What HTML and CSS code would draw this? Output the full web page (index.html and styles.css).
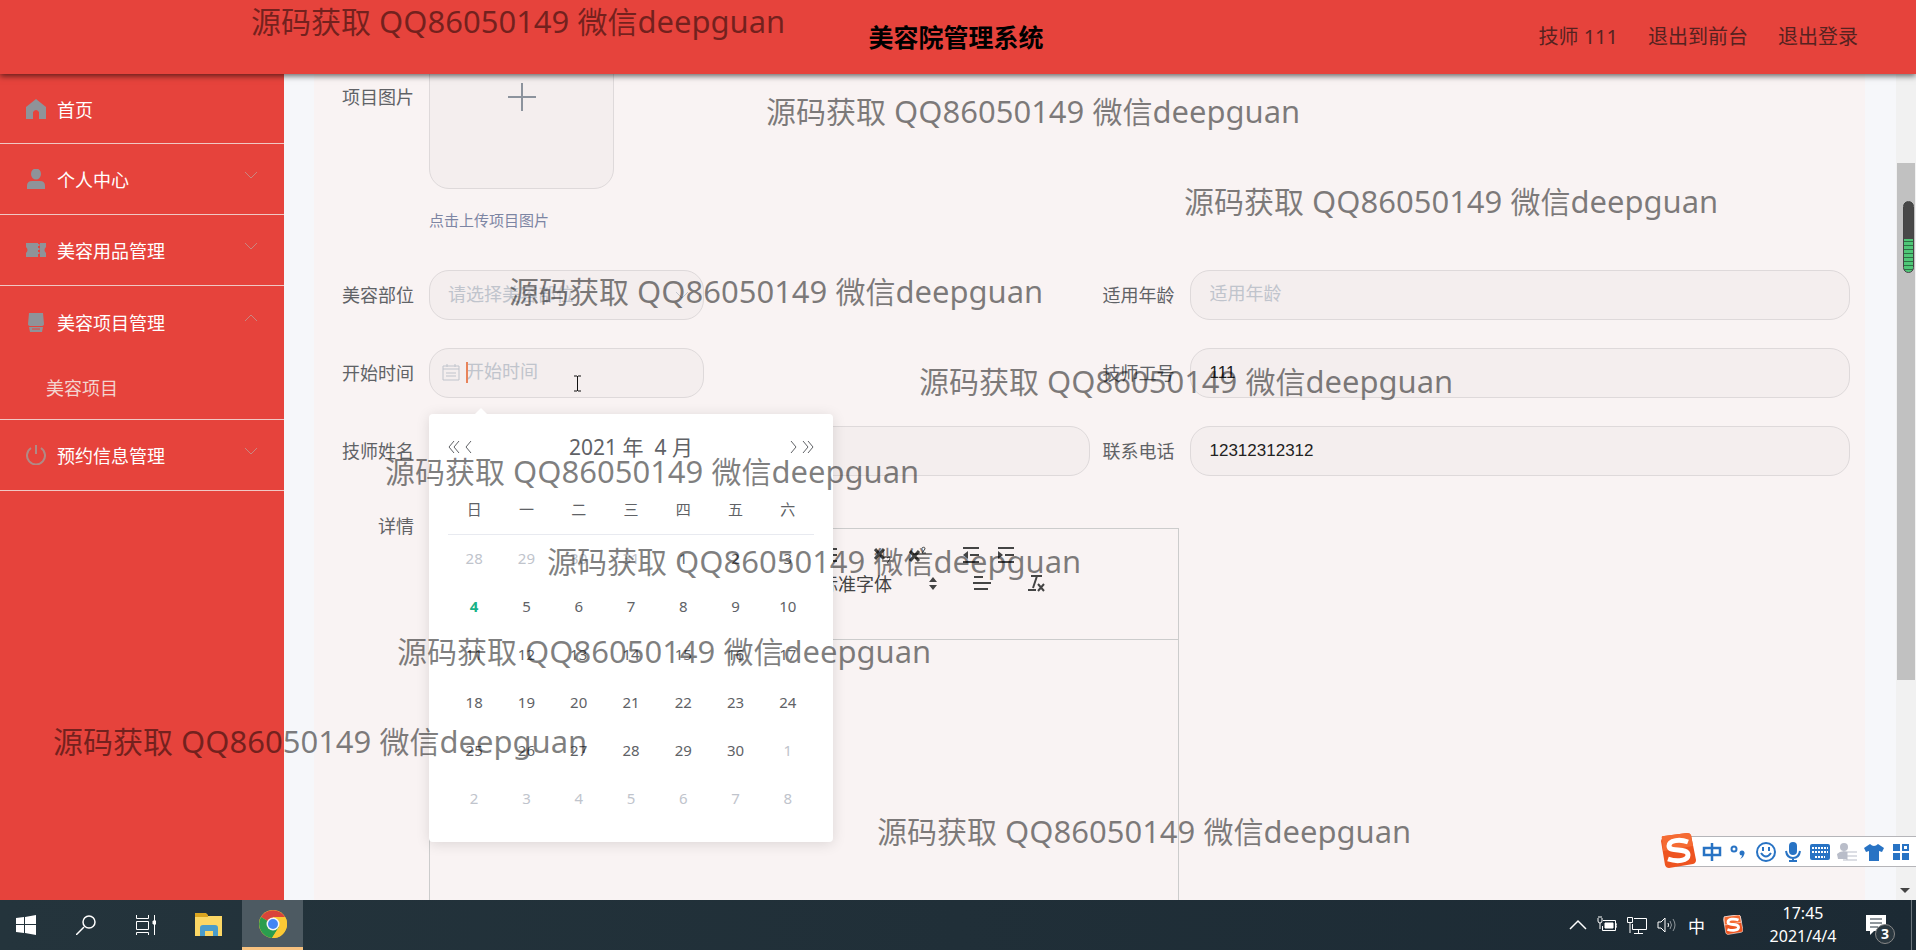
FILE: index.html
```html
<!DOCTYPE html>
<html lang="zh-CN">
<head>
<meta charset="utf-8">
<title>美容院管理系统</title>
<link rel="stylesheet" href="styles.css">
</head>
<body>
<svg class="defs" aria-hidden="true">
  <symbol id="sogou" viewBox="0 0 36 36">
    <path d="M2 5Q1 3 4 3L27 0Q30 0 31 2L36 27Q36 30 33 31L9 35Q6 35 5 32L1 8Z" fill="#ee5420"/>
    <path d="M2 5Q1 3 4 3L27 0Q30 0 31 2L33 13Q17 16 3 18Z" fill="#f56b33"/>
    <path d="M28 9C20 6 9 7 9 13C9 20 28 14 28 22C28 28 17 29 8 26" fill="none" stroke="#fff" stroke-width="5"/>
  </symbol>
  <symbol id="down" viewBox="0 0 14 22"><path d="M1 4L7 10L13 4" fill="none" stroke="currentColor" stroke-width="1"/></symbol>
  <symbol id="up" viewBox="0 0 14 22"><path d="M1 10L7 4L13 10" fill="none" stroke="currentColor" stroke-width="1"/></symbol>
</svg>

<header class="topbar">
  <h1 class="title">美容院管理系统</h1>
  <nav class="account">
    <a href="#">技师 111</a>
    <a href="#">退出到前台</a>
    <a href="#">退出登录</a>
  </nav>
</header>

<div class="main">
  <nav class="sidebar">
    <a class="item first" href="#">
      <svg class="mi" viewBox="0 0 20 20"><path d="M10 0L20 8V20H13V13Q10 9 7 13V20H0V8Z" fill="currentColor"/></svg>
      <span>首页</span>
    </a>
    <a class="item" href="#">
      <svg class="mi" viewBox="0 0 20 20"><ellipse cx="10" cy="5" rx="5" ry="5.500"/><path d="M1 20V17Q1 12 6 12H14Q19 12 19 17V20Z"/></svg>
      <span>个人中心</span>
      <svg class="chev"><use href="#down"/></svg>
    </a>
    <a class="item" href="#">
      <svg class="mi" viewBox="0 0 20 20"><path d="M0 3H12V17H0V13Q3 10 0 7ZM14 3H20V7Q17 10 20 13V17H14Z"/><path d="M12 4V6M12 8V10M12 12V14" stroke="#8f9399" stroke-width="3"/></svg>
      <span>美容用品管理</span>
      <svg class="chev"><use href="#down"/></svg>
    </a>
    <div class="group">
      <a class="item" href="#">
        <svg class="mi" viewBox="0 0 20 20"><path d="M3 1H17L18 12Q18 14 15 14H5Q2 14 2 12ZM3 15H17L16 20H4Z"/><path d="M6 17H14" stroke="#e6433c"/></svg>
        <span>美容项目管理</span>
        <svg class="chev"><use href="#up"/></svg>
      </a>
      <a class="subitem" href="#">美容项目</a>
    </div>
    <a class="item" href="#">
      <svg class="mi line" viewBox="0 0 20 20"><path d="M5 3A9 9 0 1 0 15 3M10 0V9"/></svg>
      <span>预约信息管理</span>
      <svg class="chev"><use href="#down"/></svg>
    </a>
  </nav>

  <main class="content">
    <form class="form">
      <div class="field wide">
        <label class="label" for="pic">项目图片</label>
        <button class="upload" id="pic" type="button" aria-label="上传项目图片">
          <svg width="30" height="30" viewBox="0 0 30 30"><path d="M15 1V29M1 15H29" stroke="#8c939d" stroke-width="2"/></svg>
        </button>
      </div>
      <p class="hint">点击上传项目图片</p>

      <div class="field">
        <label class="label" for="part">美容部位</label>
        <div class="short">
          <select class="control" id="part"><option>请选择美容部位</option></select>
          <svg class="select-arrow"><use href="#down"/></svg>
        </div>
      </div>
      <div class="field">
        <label class="label" for="age">适用年龄</label>
        <input class="control" id="age" placeholder="适用年龄">
      </div>

      <div class="field">
        <label class="label" for="start">开始时间</label>
        <div class="short">
          <input class="control date" id="start" placeholder="开始时间">
          <svg class="cal-icon" viewBox="0 0 18 18"><path d="M1 3H17V17H1ZM1 6H17M5 1V4M13 1V4M4 10H14M4 13H14"/></svg>
          <span class="caret"></span>
          <svg class="pointer" viewBox="0 0 9 17"><path d="M1 1H4M5 1H8M4.500 1V16M1 16H4M5 16H8" stroke="#111" fill="none"/></svg>
          <section class="picker" aria-label="选择日期">
            <div class="picker-head">
              <div class="arrows">
                <button type="button" aria-label="上一年"><svg width="12" height="14" viewBox="0 0 12 14"><path d="M6 1L1 7L6 13M11 1L6 7L11 13"/></svg></button>
                <button type="button" aria-label="上个月"><svg width="12" height="14" viewBox="0 0 12 14"><path d="M9 1L4 7L9 13"/></svg></button>
              </div>
              <span class="month">2021 年&nbsp; 4 月</span>
              <div class="arrows">
                <button type="button" aria-label="下个月"><svg width="12" height="14" viewBox="0 0 12 14"><path d="M3 1L8 7L3 13"/></svg></button>
                <button type="button" aria-label="下一年"><svg width="12" height="14" viewBox="0 0 12 14"><path d="M1 1L6 7L1 13M6 1L11 7L6 13"/></svg></button>
              </div>
            </div>
            <table class="days">
              <thead><tr><th>日</th><th>一</th><th>二</th><th>三</th><th>四</th><th>五</th><th>六</th></tr></thead>
              <tbody>
                <tr><td class="out">28</td><td class="out">29</td><td class="out">30</td><td class="out">31</td><td>1</td><td>2</td><td>3</td></tr>
                <tr><td class="today">4</td><td>5</td><td>6</td><td>7</td><td>8</td><td>9</td><td>10</td></tr>
                <tr><td>11</td><td>12</td><td>13</td><td>14</td><td>15</td><td>16</td><td>17</td></tr>
                <tr><td>18</td><td>19</td><td>20</td><td>21</td><td>22</td><td>23</td><td>24</td></tr>
                <tr><td>25</td><td>26</td><td>27</td><td>28</td><td>29</td><td>30</td><td class="out">1</td></tr>
                <tr><td class="out">2</td><td class="out">3</td><td class="out">4</td><td class="out">5</td><td class="out">6</td><td class="out">7</td><td class="out">8</td></tr>
              </tbody>
            </table>
          </section>
        </div>
      </div>
      <div class="field">
        <label class="label" for="no">技师工号</label>
        <input class="control" id="no" value="111">
      </div>

      <div class="field">
        <label class="label" for="name">技师姓名</label>
        <input class="control" id="name">
      </div>
      <div class="field">
        <label class="label" for="tel">联系电话</label>
        <input class="control" id="tel" value="12312312312">
      </div>

      <div class="field wide detail">
        <span class="label">详情</span>
        <div class="editor">
          <div class="toolbar">
            <div class="tools">
              <button type="button" class="list" aria-label="列表"><svg viewBox="0 0 18 18"><path d="M1 3H17M1 9H17M1 15H17"/></svg></button>
              <button type="button" class="sub" aria-label="下标"><svg viewBox="0 0 18 18"><path class="bold" d="M1 3L10 13M10 3L1 13"/><path class="thin" d="M13 12Q16 10 16 13L13 17H17"/></svg></button>
              <button type="button" class="sup" aria-label="上标"><svg viewBox="0 0 18 18"><path class="bold" d="M1 5L10 15M10 5L1 15"/><path class="thin" d="M13 2Q16 0 16 3L13 7H17"/></svg></button>
              <button type="button" class="outdent" aria-label="减少缩进"><svg viewBox="0 0 18 18"><path d="M1 2H17M8 9H17M1 16H17"/><path class="solid" d="M6 5V13L1 9Z"/></svg></button>
              <button type="button" class="indent" aria-label="增加缩进"><svg viewBox="0 0 18 18"><path d="M1 2H17M8 9H17M1 16H17"/><path class="solid" d="M1 5V13L6 9Z"/></svg></button>
            </div>
            <div class="tools second">
              <button type="button" class="font">标准字体 <svg viewBox="0 0 18 18"><path class="solid" d="M5 8L9 3L13 8ZM5 11L9 16L13 11Z"/></svg></button>
              <button type="button" class="align" aria-label="对齐"><svg viewBox="0 0 18 18"><path d="M1 3H10M0 9H18M1 15H15"/></svg></button>
              <button type="button" aria-label="清除格式"><svg viewBox="0 0 18 18"><path d="M4 2H15M10 2L6 14M1 16H9M11 10L17 17M17 10L11 17"/></svg></button>
            </div>
          </div>
          <div class="paper"></div>
        </div>
      </div>
    </form>
  </main>
  <div class="scroll">
    <div class="thumb"></div>
    <svg class="scroll-arrow" viewBox="0 0 10 5"><path d="M0 0H10L5 5Z" fill="#444"/></svg>
    <div class="meter"></div>
  </div>
</div>

<footer class="taskbar">
  <div class="apps">
    <button class="app start" aria-label="开始"><svg width="20" height="20" viewBox="0 0 20 20" fill="#fff"><path d="M0 3L8 2V9H0ZM9 2L20 0V9H9ZM0 10H8V18L0 17ZM9 10H20V20L9 18Z"/></svg></button>
    <button class="app" aria-label="搜索"><svg width="20" height="20" viewBox="0 0 20 20" fill="none" stroke="#fff" stroke-width="1.500"><circle cx="13" cy="7" r="6"/><path d="M8 12L0 20"/></svg></button>
    <button class="app" aria-label="任务视图"><svg width="20" height="20" viewBox="0 0 20 20" fill="none" stroke="#fff"><path d="M0.500 0V3.500H12.500V0M0.500 6.500H12.500V14.500H0.500ZM0.500 20V17.500H12.500V20M18.500 0V20"/><path d="M17 6H20V9H17Z" fill="#fff"/></svg></button>
    <button class="app files" aria-label="文件资源管理器"><svg width="28" height="24" viewBox="0 0 28 24"><path d="M0 1H11L13 3H27V23H0Z" fill="#fcd765"/><path d="M0 0H11L13 2V4H0Z" fill="#dba520"/><path d="M5 23V15Q5 12 8 12H20Q23 12 23 15V23H18V18H10V23Z" fill="#4a9ccb"/></svg></button>
    <button class="app chrome" aria-label="Chrome"><svg width="28" height="28" viewBox="0 0 28 28"><circle cx="14" cy="14" r="14" fill="#fcc934"/><path d="M14 14L2 7A14 14 0 0 1 26 7H14Z" fill="#d9443a"/><path d="M14 14L2 7A14 14 0 0 0 13 28L20 17Z" fill="#2a9d4e"/><path d="M14 7H26.100A14 14 0 0 1 13 28L20 17Z" fill="#fcc934"/><circle cx="14" cy="14" r="6.500" fill="#f4f6f8"/><circle cx="14" cy="14" r="5" fill="#4285f4"/></svg></button>
  </div>
  <div class="tray">
    <svg width="18" height="20" viewBox="0 0 18 20"><path d="M1 14L9 6L17 14" stroke-width="1.500"/></svg>
    <svg width="20" height="20" viewBox="0 0 20 20"><path d="M6 5.500H18.500V15.500H5.500V11M18.500 9H20V12H18.500M1 3V6Q1 8 3 8Q5 8 5 6V3M2 1V3M4 1V3M3 8V14"/><path d="M8 8H16V13H8Z" fill="#fff"/></svg>
    <svg width="20" height="20" viewBox="0 0 20 20"><path d="M7 3.500H19.500V14.500H5.500V9M11.500 14V18M7 18.500H16M0.500 2.500H5.500V7.500H0.500ZM3 7V18"/></svg>
    <svg width="20" height="20" viewBox="0 0 20 20"><path d="M1 7H4L8 3V17L4 13H1ZM11 8Q12 10 11 12"/><path d="M13 6Q16 10 13 14M16 4Q20 10 16 16" opacity=".5"/></svg>
    <span class="lang">中</span>
    <svg width="20" height="20"><use href="#sogou"/></svg>
    <div class="clock"><time>17:45</time><time>2021/4/4</time></div>
    <button class="notice" aria-label="通知"><svg width="30" height="32" viewBox="0 0 30 32"><path d="M0 1H20V17H8L4 21V17H0Z" fill="#fff"/><path d="M4 5H16M4 9H16M4 13H12" stroke="#22303a"/></svg><span class="badge">3</span></button>
  </div>
</footer>

<div class="ime">
  <svg class="ime-logo"><use href="#sogou"/></svg>
  <svg viewBox="0 0 20 20"><path d="M2 6H18V13H2ZM10 1V19" fill="none" stroke="#2873c4" stroke-width="2.500"/></svg>
  <svg viewBox="0 0 20 20"><circle cx="5" cy="7" r="2.500" fill="none" stroke="#2873c4" stroke-width="2"/><circle cx="13" cy="11" r="2.500"/><path d="M15 10Q16 15 11 17Q14 14 13 11Z"/></svg>
  <svg viewBox="0 0 20 20"><g fill="none" stroke="#2873c4" stroke-width="2"><circle cx="10" cy="10" r="9"/><path d="M5 11Q10 18 15 11M7 5V9M13 5V9"/></g></svg>
  <svg viewBox="0 0 20 20"><rect x="6" y="0" width="8" height="13" rx="4"/><path d="M3 9Q4 16 10 16Q16 16 17 9M10 16V20M6 19H14" fill="none" stroke="#2873c4" stroke-width="2"/></svg>
  <svg viewBox="0 0 20 20"><rect x="0" y="2" width="20" height="16" rx="2"/><path d="M2 6H18M2 10H18M5 15H15" stroke="#fff" stroke-width="2" stroke-dasharray="2 1"/></svg>
  <svg viewBox="0 0 20 20"><g fill="#b9bdc9"><circle cx="7" cy="5" r="4"/><path d="M0 12Q4 8 10 10V17H1Z"/><path d="M6 10H20M6 14H20M6 18H20M10 10V18" stroke="#b9bdc9"/></g></svg>
  <svg viewBox="0 0 20 20"><path d="M6 2Q10 6 14 2L20 6L18 10L15 9V19H5V9L2 10L0 6Z"/></svg>
  <svg viewBox="0 0 20 20"><path d="M2 2H9V9H2ZM2 11H9V18H2ZM11 11H18V18H11Z"/><path d="M12 3H17V8H12Z" fill="none" stroke="#2873c4" stroke-width="2"/></svg>
</div>

<div class="marks" aria-hidden="true">
  <span class="mark m1">源码获取<span class="latin"> QQ86050149 </span>微信<span class="latin">deepguan</span></span>
  <span class="mark m2">源码获取<span class="latin"> QQ86050149 </span>微信<span class="latin">deepguan</span></span>
  <span class="mark m3">源码获取<span class="latin"> QQ86050149 </span>微信<span class="latin">deepguan</span></span>
  <span class="mark m4">源码获取<span class="latin"> QQ86050149 </span>微信<span class="latin">deepguan</span></span>
  <span class="mark m5">源码获取<span class="latin"> QQ86050149 </span>微信<span class="latin">deepguan</span></span>
  <span class="mark m6">源码获取<span class="latin"> QQ86050149 </span>微信<span class="latin">deepguan</span></span>
  <span class="mark m7">源码获取<span class="latin"> QQ86050149 </span>微信<span class="latin">deepguan</span></span>
  <span class="mark m8">源码获取<span class="latin"> QQ86050149 </span>微信<span class="latin">deepguan</span></span>
  <span class="mark m9">源码获取<span class="latin"> QQ86050149 </span>微信<span class="latin">deepguan</span></span>
  <span class="mark m10">源码获取<span class="latin"> QQ86050149 </span>微信<span class="latin">deepguan</span></span>
</div>
</body>
</html>
```
FILE: styles.css
```css
* { box-sizing: border-box; }
body {
  margin: 0;
  height: 100vh;
  display: flex;
  flex-direction: column;
  overflow: hidden;
  position: relative;
  font-family: "Noto Sans", "Noto Sans CJK SC", sans-serif;
  font-size: 18px;
  color: #606266;
}
a { color: inherit; text-decoration: none; }
button { font: inherit; color: inherit; border: 0; background: none; padding: 0; }
.defs { position: absolute; width: 0; height: 0; }

.topbar {
  flex: none;
  height: 74px;
  display: grid;
  grid-template-columns: 1fr auto 1fr;
  align-items: center;
  background: #e6433c;
  box-shadow: 0 2px 6px rgba(0, 0, 0, .6);
  padding-right: 4px;
  z-index: 2;
}
.title { grid-column: 2; margin: 0; font-size: 25px; line-height: 36px; color: #000; }
.account {
  display: flex;
  justify-content: flex-end;
  gap: 30px;
  padding-right: 54px;
  font-size: 20px;
  line-height: 30px;
  color: #562220;
}

.main { flex: 1; min-height: 0; display: flex; }
.sidebar { flex: none; width: 284px; background: #e6433c; color: #fff; }
.item {
  height: 71px;
  display: flex;
  align-items: center;
  padding: 0 26px;
  border-bottom: 1px solid #f0c8c4;
}
.first { height: 70px; }
.mi { width: 20px; height: 20px; margin-right: 11px; fill: #8f9399; color: #8f9399; }
.mi.line { fill: none; stroke: #b08a86; stroke-width: 2; }
.chev { width: 14px; height: 22px; margin-left: auto; color: #c98680; }
.group { border-bottom: 1px solid #f0c8c4; }
.group .item { border: 0; }
.subitem { display: block; padding-left: 46px; line-height: 62px; color: #f3d5d0; }

.content { flex: 1; min-width: 0; padding: 0 31px 0 30px; background: #f6f7fa; overflow: hidden; }
.form {
  margin-top: -70px;
  padding: 0 15px;
  background: #f9f3f3;
  display: grid;
  grid-template-columns: 1fr 1fr;
  row-gap: 28px;
}
.field { display: flex; align-items: center; min-width: 0; }
.wide { grid-column: 1 / 3; }
.label { flex: none; width: 100px; padding-right: 15px; text-align: right; line-height: 44px; }
.upload {
  width: 185px;
  height: 185px;
  display: flex;
  align-items: center;
  justify-content: center;
  background: #f4eeee;
  border: 1px solid #ded9da;
  border-radius: 20px;
}
.hint {
  grid-column: 1 / 3;
  margin: -8px 0 0;
  padding: 0 0 11px 100px;
  font-size: 15px;
  line-height: 22px;
  color: #7d85a3;
}
.control {
  width: 100%;
  height: 50px;
  padding: 0 19px;
  border: 1px solid #ded9da;
  border-radius: 20px;
  background: #f4eeee;
  font-family: "Liberation Sans", "Noto Sans CJK SC", sans-serif;
  font-size: 17px;
  color: #222;
  outline: 0;
}
.control::placeholder { font-size: 18px; color: #c0c4cc; opacity: 1; }
select.control { appearance: none; padding: 0 18px; color: #c0c4cc; font-size: 18px; }
.short { width: 275px; position: relative; }
.select-arrow { position: absolute; right: 15px; top: 18px; width: 14px; height: 22px; color: #c0c4cc; }
.control.date { padding: 0 36px; }
.cal-icon { position: absolute; left: 13px; top: 15px; width: 18px; height: 18px; fill: none; stroke: #c0c4cc; }
.caret { position: absolute; left: 37px; top: 14px; width: 2px; height: 21px; background: #e8835a; }
.pointer { position: absolute; left: 144px; top: 27px; width: 9px; height: 17px; }

.picker {
  position: absolute;
  left: 0;
  top: 66px;
  z-index: 1;
  width: 404px;
  padding: 18px 19px 20px;
  background: #fff;
  border-radius: 4px;
  box-shadow: 0 2px 14px rgba(0, 0, 0, .12);
}
.picker::before {
  content: "";
  position: absolute;
  left: 45px;
  top: -6px;
  border: 7px solid transparent;
  border-top: 0;
  border-bottom-color: #fff;
}
.picker-head { display: flex; justify-content: space-between; align-items: center; height: 30px; }
.arrows { display: flex; gap: 2px; }
.arrows svg { display: block; fill: none; stroke: #606266; }
.month { font-size: 21px; line-height: 30px; }
.days { width: 100%; margin-top: 22px; table-layout: fixed; border-collapse: collapse; font-size: 15px; text-align: center; }
.days th { height: 50px; padding: 0; font-weight: 400; border-bottom: 1px solid #e8eaf0; }
.days td { height: 48px; padding: 0; }
.days .out { color: #c0c4cc; }
.days .today { color: #18b187; font-weight: 700; }

.detail { align-items: flex-start; }
.editor { width: 750px; margin-top: 24px; border: 1px solid #ccc; }
.toolbar { height: 111px; padding: 14px 12px; border-bottom: 1px solid #ccc; color: #444; }
.tools { display: flex; align-items: center; height: 24px; padding-left: 378px; }
.tools svg { width: 18px; height: 18px; display: block; fill: none; stroke: #444; stroke-width: 2; }
.tools .thin { stroke-width: 1; }
.tools .bold { stroke-width: 3; }
.tools .solid { fill: #444; stroke: none; }
.list { margin-right: 36px; }
.sub, .outdent { margin-right: 17px; }
.sup { margin-right: 35px; }
.second { height: 32px; }
.font { display: flex; align-items: center; gap: 32px; margin-right: 31px; }
.align { margin-right: 36px; }
.paper { height: 340px; }

.scroll { flex: none; width: 20px; background: #f1f1f1; position: relative; padding-top: 89px; }
.thumb { width: 18px; height: 517px; background: #c1c1c1; margin-left: 1px; }
.scroll-arrow { position: absolute; left: 4px; bottom: 7px; width: 10px; height: 5px; }
.meter {
  position: absolute;
  left: 7px;
  top: 127px;
  width: 11px;
  height: 72px;
  border: 1px solid #444;
  border-radius: 6px;
  background: linear-gradient(#484848 37px, transparent 37px), repeating-linear-gradient(#4fc777 0 3px, #2e7045 3px 4px);
}

.taskbar {
  flex: none;
  height: 50px;
  display: flex;
  justify-content: space-between;
  background: linear-gradient(90deg, #24343c, #1c2a34);
  color: #fff;
  z-index: 2;
}
.apps { display: flex; }
.app { width: 60px; display: flex; align-items: center; justify-content: center; }
.start { width: 56px; padding-right: 4px; }
.files { width: 66px; }
.chrome { width: 61px; background: #4d5a62; border-bottom: 3px solid #f8c27f; }
.tray { display: flex; align-items: center; padding-right: 4px; gap: 10px; }
.tray > svg { fill: none; stroke: #fff; stroke-width: 1; }
.lang { font-size: 17px; margin: 0 8px 0 1px; }
.clock { width: 100px; display: flex; flex-direction: column; text-align: center; font-size: 16px; line-height: 23px; }
.notice { position: relative; width: 48px; height: 50px; padding: 10px 0 0 2px; border-right: 1px solid #6b757c; margin-left: 1px; }
.notice svg { display: block; }
.badge {
  position: absolute;
  left: 11px;
  top: 24px;
  width: 20px;
  height: 20px;
  border: 1px solid #888;
  border-radius: 50%;
  background: #2b3840;
  font-size: 14px;
  font-weight: 700;
  line-height: 18px;
}

.ime {
  position: absolute;
  right: 0;
  bottom: 83px;
  z-index: 3;
  width: 240px;
  height: 31px;
  display: flex;
  align-items: center;
  gap: 7px;
  padding-left: 25px;
  background: #fff;
  border: 1px solid #b5b5b9;
  border-right: 0;
}
.ime svg { flex: none; width: 20px; height: 20px; fill: #2873c4; }
.ime .ime-logo { position: absolute; left: -17px; top: -4px; width: 36px; height: 36px; }

.marks { position: absolute; inset: 0; z-index: 4; pointer-events: none; }
.mark { position: absolute; font-size: 30px; line-height: 40px; white-space: nowrap; color: rgba(0, 0, 0, .5); }
.latin { font-size: 31px; }
.m1 { left: 251px; top: 1px; }
.m2 { left: 766px; top: 91px; }
.m3 { left: 1184px; top: 181px; }
.m4 { left: 509px; top: 271px; }
.m5 { left: 919px; top: 361px; }
.m6 { left: 385px; top: 451px; }
.m7 { left: 547px; top: 541px; }
.m8 { left: 397px; top: 631px; }
.m9 { left: 53px; top: 721px; }
.m10 { left: 877px; top: 811px; }
```
